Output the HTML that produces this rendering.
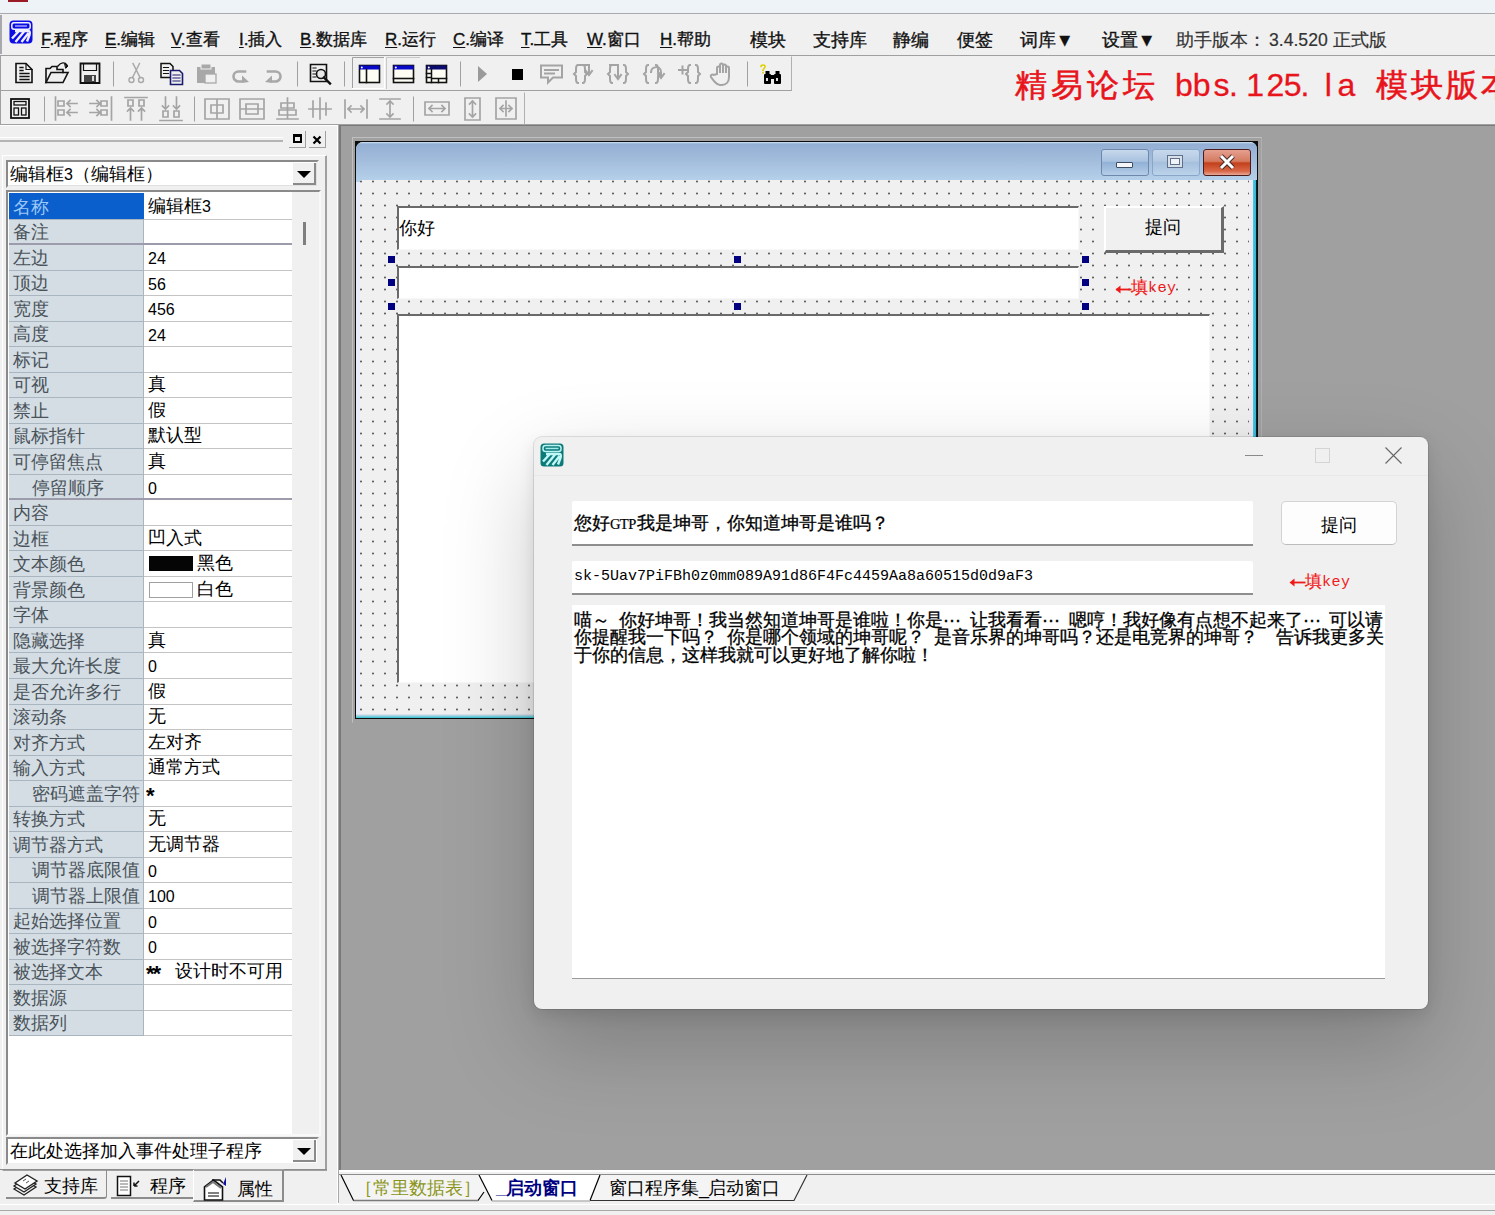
<!DOCTYPE html>
<html><head><meta charset="utf-8">
<style>
*{box-sizing:border-box}
html,body{margin:0;padding:0}
body{width:1495px;height:1215px;overflow:hidden;position:relative;background:#f0f0f0;font-family:"Liberation Sans",sans-serif;color:#000}
.a{position:absolute}
#top{left:0;top:0;width:1495px;height:14px;background:#eef3f8;border-bottom:1px solid #a7a9ad}
#menu{left:0;top:14px;width:1495px;height:42px;background:#f0f0f0;border-bottom:1px solid #a0a0a0}
.mi{position:absolute;top:16px;font-size:17px;line-height:20px;white-space:nowrap;color:#111;-webkit-text-stroke:0.35px #111}
.mi u{text-decoration:underline;text-underline-offset:2px}
#tb1{left:0;top:56px;width:792px;height:35px;border-bottom:1px solid #a0a0a0;}
#tb2{left:0;top:92px;width:1495px;height:33px;border-bottom:1px solid #a0a0a0;z-index:0}
#mdi{left:339px;top:125px;width:1156px;height:1045px;background:#a0a0a0;border-left:2px solid #7a7a7a;border-top:1px solid #7a7a7a}
.pl{font-size:17.6px;line-height:26px;white-space:nowrap}
.pv{font-size:17.5px;line-height:25px;white-space:nowrap;color:#000}
.fw.fb{font-size:17.9px;-webkit-text-stroke:0.3px #000}
.el{display:inline-block;width:17.9px;font-style:normal;text-align:center}
.sp{display:inline-block;width:8.95px}
.fw{font-size:17.25px;line-height:24px;white-space:nowrap;color:#000}
.bn{top:51.2px;font-size:32px;line-height:40px;color:#e8141c;-webkit-text-stroke:0.3px #e8141c}
.gtp{display:inline-block;width:26.85px;font-style:normal;font-family:"Liberation Serif",serif;font-size:14.5px;letter-spacing:-0.6px;-webkit-text-stroke:0.2px #000}
</style></head><body>
<div id="top" class="a"><div class="a" style="left:8px;top:0;width:20px;height:2px;background:#9a1a26"></div></div>
<div id="menu" class="a">
<div class="a" style="left:0;top:1px;width:2px;height:39px;background:#a8a8b0"></div>
<svg class="a" style="left:9px;top:6px" width="24" height="24" viewBox="0 0 24 24">
<rect x="0.5" y="0.5" width="23" height="23" rx="4" fill="#0c0ce4"/>
<rect x="2.8" y="2.8" width="18.4" height="6.4" rx="2.2" fill="none" stroke="#f0f0ff" stroke-width="1.5"/>
<path d="M6 6h12" stroke="#c8c8ff" stroke-width="1.2"/>
<path d="M6 11h13.5c1.5 0 1.5 2 1 4l-2.5 6.5M3 18.5l7-7.5M6.5 22l9-11M12.5 22l7-9" stroke="#eeeeff" stroke-width="2.4" fill="none" stroke-linejoin="round"/>
</svg>
<div class="a" style="left:1015px;top:50.8px;font-size:32px;line-height:40px;color:#e8141c;white-space:nowrap;letter-spacing:4px;-webkit-text-stroke:0.6px #e8141c">精易论坛</div>
<div class="a bn" style="left:1175px">b</div><div class="a bn" style="left:1192.7px">b</div><div class="a bn" style="left:1213.5px">s</div><div class="a bn" style="left:1229px">.</div><div class="a bn" style="left:1246.3px">1</div><div class="a bn" style="left:1266.4px">2</div><div class="a bn" style="left:1283.7px">5</div><div class="a bn" style="left:1300.6px">.</div><div class="a bn" style="left:1324.8px">l</div><div class="a bn" style="left:1337.6px">a</div>
<div class="a" style="left:1375.5px;top:50.8px;font-size:32px;line-height:40px;color:#e8141c;white-space:nowrap;letter-spacing:3px;-webkit-text-stroke:0.6px #e8141c">模块版本</div>
<span class="mi" style="left:41px"><u>F</u>.程序</span>
<span class="mi" style="left:105px"><u>E</u>.编辑</span>
<span class="mi" style="left:171px"><u>V</u>.查看</span>
<span class="mi" style="left:239px"><u>I</u>.插入</span>
<span class="mi" style="left:300px"><u>B</u>.数据库</span>
<span class="mi" style="left:385px"><u>R</u>.运行</span>
<span class="mi" style="left:453px"><u>C</u>.编译</span>
<span class="mi" style="left:521px"><u>T</u>.工具</span>
<span class="mi" style="left:587px"><u>W</u>.窗口</span>
<span class="mi" style="left:660px"><u>H</u>.帮助</span>
<span class="mi" style="left:750px;font-size:17.6px">模块</span>
<span class="mi" style="left:813px;font-size:17.6px">支持库</span>
<span class="mi" style="left:893px;font-size:17.6px">静编</span>
<span class="mi" style="left:957px;font-size:17.6px">便签</span>
<span class="mi" style="left:1020px;font-size:17.6px">词库▼</span>
<span class="mi" style="left:1102px;font-size:17.6px">设置▼</span>
<span class="mi" style="left:1176px;font-size:17.6px;color:#333;-webkit-text-stroke:0.2px #333">助手版本<i style="display:inline-block;width:21px;font-style:normal">：</i>3.4.520 正式版</span>
</div>
<div id="tb1" class="a"></div>
<div id="tb2" class="a"></div>
<svg class="a" style="left:0;top:0" width="800" height="126" viewBox="0 0 800 126">
<g fill="none" stroke-linecap="square">
<!-- toolbar left border -->
<line x1="0.5" y1="56" x2="0.5" y2="125" stroke="#a0a0a0"/>
<line x1="791.5" y1="57" x2="791.5" y2="90" stroke="#b0b0b0"/>
<line x1="524.5" y1="93" x2="524.5" y2="124" stroke="#b0b0b0"/>
<!-- separators row1 -->
<g stroke="#a0a0a0"><line x1="113.5" y1="62" x2="113.5" y2="86"/><line x1="297.5" y1="62" x2="297.5" y2="86"/><line x1="344.5" y1="62" x2="344.5" y2="86"/><line x1="460.5" y1="62" x2="460.5" y2="86"/><line x1="747.5" y1="62" x2="747.5" y2="86"/></g>
<g stroke="#a0a0a0"><line x1="44.5" y1="97" x2="44.5" y2="121"/><line x1="194.5" y1="97" x2="194.5" y2="121"/><line x1="413.5" y1="97" x2="413.5" y2="121"/></g>
<!-- new doc -->
<path d="M16 63.5h10l6 6v13h-16z" stroke="#111" stroke-width="1.6"/>
<path d="M26 63.5v6h6" stroke="#111" stroke-width="1.2"/>
<path d="M20 67.5h3M20 70.5h3M20 73.5h9M20 76.5h9M20 79.5h9" stroke="#111" stroke-width="1.3"/>
<!-- open folder -->
<path d="M46 82.5v-14h4l2 -2h5v3h6v3" stroke="#111" stroke-width="1.6"/>
<path d="M46 82.5l5-10h17l-5 10z" stroke="#111" stroke-width="1.6"/>
<path d="M58 66c3-4 7-4 9 -1" stroke="#111" stroke-width="1.3"/><path d="M65 64l3 2-2 2z" fill="#111" stroke="#111"/>
<!-- save -->
<path d="M80.5 63.5h19v19.5h-19z" stroke="#111" stroke-width="1.8"/>
<path d="M83.5 63.5v7h13v-7" stroke="#111" stroke-width="1.2"/>
<rect x="84" y="75" width="12" height="7" fill="#444"/><rect x="92" y="76" width="2" height="5" fill="#ddd"/>
<!-- cut (gray) -->
<g stroke="#a8a8a8" stroke-width="1.4"><circle cx="131.5" cy="80" r="2.5"/><circle cx="141" cy="80" r="2.5"/><path d="M132.5 77.5l7-14M140 77.5l-7-14"/></g>
<!-- copy -->
<path d="M161 63.5h9l3 3v11h-12z" stroke="#111" stroke-width="1.5"/>
<path d="M163.5 67.5h5M163.5 70.5h5M163.5 73.5h5" stroke="#111" stroke-width="1.1"/>
<path d="M170.5 70.5h9l3 3v11h-12z" fill="#f0f0f0" stroke="#1a1a6e" stroke-width="1.6"/>
<path d="M173 75h7M173 78h7M173 81h7" stroke="#1a1a6e" stroke-width="1.2"/>
<!-- paste gray -->
<path d="M197 67h18v16h-18z" fill="#a8a8a8"/><rect x="201" y="64" width="10" height="5" fill="#a8a8a8" stroke="#f0f0f0"/><rect x="205" y="74" width="11" height="9" fill="#f0f0f0" stroke="#a8a8a8" stroke-width="1.3"/>
<!-- redo/undo gray -->
<path d="M245 71.5H238.5A5 5 0 0 0 238.5 81.5H241" stroke="#a8a8a8" stroke-width="2.6"/><path d="M242 75.5l7 6.5-7 1z" fill="#a8a8a8"/>
<path d="M268 71.5H275.5A5 5 0 0 1 275.5 81.5H273" stroke="#a8a8a8" stroke-width="2.6"/><path d="M272 75.5l-7 6.5 7 1z" fill="#a8a8a8"/>
<!-- find -->
<path d="M310.5 64.5h16v17h-16z" stroke="#111" stroke-width="1.6"/>
<path d="M313 68h3M313 71h3M313 74h3M313 77h3" stroke="#111" stroke-width="1.2"/>
<circle cx="321" cy="74" r="4.5" fill="#e8e8e8" stroke="#111" stroke-width="1.6"/><path d="M324 77.5l6 6" stroke="#111" stroke-width="2.4"/>
<!-- pressed button -->
<path d="M352.5 88.5v-31h32" stroke="#a0a0a0"/><path d="M352.5 88.5h32v-31" stroke="#fff"/>
<path d="M386.5 88.5v-31h33" stroke="#c8c8c8"/>
<!-- layouts -->
<g stroke="#111" stroke-width="1.6">
<rect x="359.5" y="65.5" width="20" height="17" fill="#fdfdf4"/><rect x="393.5" y="65.5" width="20" height="17" fill="#fdfdf4"/><rect x="426.5" y="65.5" width="20" height="17" fill="#fdfdf4"/>
</g>
<rect x="359.5" y="65.5" width="20" height="4" fill="#0808c8"/><rect x="393.5" y="65.5" width="20" height="4" fill="#0808c8"/><rect x="426.5" y="65.5" width="20" height="4" fill="#0a0a70"/>
<circle cx="361.8" cy="67.5" r="1" fill="#fff"/><circle cx="395.8" cy="67.5" r="1" fill="#fff"/><circle cx="428.8" cy="67.5" r="1" fill="#fff"/>
<path d="M366.5 69.5v13" stroke="#111" stroke-width="1.6"/>
<path d="M393.5 78.5h20" stroke="#111" stroke-width="1.6"/>
<path d="M431.5 69.5v13M426.5 73.5h5M426.5 77.5h5M431.5 78.5h15M438.5 78.5v4" stroke="#111" stroke-width="1.5"/>
<!-- play/stop -->
<path d="M478 66l9 8-9 8z" fill="#9a9a9a"/>
<rect x="512" y="69" width="11" height="11" fill="#000"/>
<!-- gray run icons -->
<g stroke="#a4a4a4" stroke-width="2">
<path d="M541 65.5h21v12h-9l-5 5v-5h-7z"/><path d="M545 70h13M545 73.5h9"/>
<path d="M578 65c-2 0-2 2-2 4v3l-2 2 2 2v3c0 2 0 4 2 4M583 65c2 0 2 2 2 4v3l2 2-2 2v3c0 2 0 4-2 4M580 65h9v8M586 71l3 4 3-4"/>
<path d="M612 65c-2 0-2 2-2 4v3l-2 2 2 2v3c0 2 0 4 2 4M624 65c2 0 2 2 2 4v3l2 2-2 2v3c0 2 0 4-2 4M610 65h8v13M615 75l3 4 3-4"/>
<path d="M648 65c-2 0-2 2-2 4v3l-2 2 2 2v3c0 2 0 4 2 4M656 65c2 0 2 2 2 4v3l2 2-2 2v3c0 2 0 4-2 4M651 72c0-6 10-7 10 0v4M658 74l3 4 3-4"/>
<path d="M690 65c-2 0-2 2-2 4v3l-2 2 2 2v3c0 2 0 4 2 4M696 65c2 0 2 2 2 4v3l2 2-2 2v3c0 2 0 4-2 4M679 70h7M682.5 66.5v7"/>
<path d="M717 74v-6c0-2 3-2 3 0v5v-8c0-2 3-2 3 0v8v-7c0-2 3-2 3 0v7v-5c0-2 3-2 3 0v9c0 5-3 8-7 8h-2c-3 0-4-2-6-4l-3-4c-1-2 1-3 3-2z"/>
</g>
<!-- binoculars -->
<path d="M761 66.5c0-2 4-2 4 0s-2 2-2 4" stroke="#e0d000" stroke-width="1.6"/><rect x="762.2" y="72" width="1.6" height="1.6" fill="#e0d000"/>
<rect x="764" y="74" width="7" height="10" rx="1" fill="#000"/><rect x="774" y="74" width="7" height="10" rx="1" fill="#000"/>
<rect x="765.5" y="71" width="4" height="4" fill="#000"/><rect x="775.5" y="71" width="4" height="4" fill="#000"/>
<rect x="770" y="75" width="5" height="4" fill="#000"/>
<rect x="766" y="78" width="2" height="3" fill="#ddd"/><rect x="776" y="78" width="2" height="3" fill="#ddd"/>
<!-- row2 layout icon -->
<rect x="11" y="99" width="18" height="19" stroke="#111" stroke-width="1.8"/>
<rect x="14" y="101.5" width="12" height="3.5" stroke="#111" stroke-width="1.3"/>
<rect x="14" y="108" width="4.5" height="7" stroke="#111" stroke-width="1.3"/><rect x="21.5" y="108" width="4.5" height="7" stroke="#111" stroke-width="1.3"/>
<!-- row2 gray align icons -->
<g stroke="#a4a4a4" stroke-width="1.7">
<path d="M55.5 97v23M58 101h6v5h-6zM58 110h6v5h-6zM67 103.5h10M67 112.5h10M70 100.5l-3 3 3 3M70 109.5l-3 3 3 3"/>
<path d="M111.5 97v23M101 101h6v5h-6zM101 110h6v5h-6zM90 103.5h10M90 112.5h10M97 100.5l3 3-3 3M97 109.5l3 3-3 3"/>
<path d="M125 97.5h22M128 100h5v6h-5zM139 100h5v6h-5zM130.5 108v12M141.5 108v12M127.5 111l3-3 3 3M138.5 111l3-3 3 3"/>
<path d="M160 120.5h22M163 111h5v6h-5zM174 111h5v6h-5zM165.5 97v12M176.5 97v12M162.5 106l3 3 3-3M173.5 106l3 3 3-3"/>
<path d="M205 99h24v20h-24zM217 99v20M211 105h12v8h-12z"/>
<path d="M240 99h24v20h-24zM240 109h24M246 104h12v10h-12z"/>
<path d="M277 119h21M287.5 98v21M281 103h13v5h-13zM279 110h17v5h-17z"/>
<path d="M309 109h22M320 98v21M313 101v16M326 103v12"/>
<path d="M345 100v18M367 100v18M348 109h16M351 106l-3 3 3 3M361 106l3 3-3 3"/>
<path d="M380 99h20M380 119h20M390 101v16M387 104l3-3 3 3M387 114l3 3 3-3"/>
<path d="M425 102h24v13h-24zM429 108.5h16M432 105.5l-3 3 3 3M442 105.5l3 3-3 3"/>
<path d="M465 98h15v22h-15zM472.5 101v16M469.5 104l3-3 3 3M469.5 114l3 3 3-3"/>
<path d="M496 98h20v21h-20zM500 108.5h12M506 101v15M503 105.5l-3 3 3 3M509 105.5l3 3-3 3"/>
</g>
</g>
</svg>

<div id="mdi" class="a"></div>
<!-- designer form -->
<div class="a" style="left:352px;top:137px;width:910px;height:586px;border:1px solid #c0c0c0;border-right-color:#b0b0b0;border-bottom-color:transparent"></div>
<div class="a" style="left:355px;top:141px;width:903px;height:578px;background:#0c0c0c"></div>
<div class="a" style="left:356px;top:142px;width:901px;height:576px;background:#e8ecf8;border-radius:7px 7px 0 0;overflow:hidden">
  <div class="a" style="left:0;top:0;width:901px;height:40px;background:linear-gradient(#cfe4f6 0px,#93afd3 2px,#a4bedd 20px,#b5d0ea 38px)"></div>
  <div class="a" style="right:0;top:38px;width:8px;height:538px;background:linear-gradient(90deg,#f2eef4 0,#f0e8f2 50%,#48c8e0 56%,#30b8d8 85%,#0c2030 88%)"></div>
  <div class="a" style="left:0;bottom:0;width:901px;height:4px;background:linear-gradient(#f4e4f0,#30c0d0)"></div>
</div>
<div id="grid" class="a" style="left:360px;top:180px;width:889px;height:534px;background-color:#f0f0f0;background-image:radial-gradient(circle at 1px 1.5px,#606060 0.85px,transparent 1.25px);background-size:12px 12px;background-position:0px 0px"></div>
<!-- title buttons -->
<div class="a" style="left:1101px;top:149px;width:48px;height:27px;border:1px solid #6d88ac;border-radius:3px;background:linear-gradient(#c6d8ec,#a9c2df 45%,#92b1d6 50%,#b4cde8)"></div>
<div class="a" style="left:1116px;top:162px;width:17px;height:6px;background:#f4f6f8;border:1px solid #3c4c64;border-radius:1px"></div>
<div class="a" style="left:1152px;top:149px;width:48px;height:27px;border:1px solid #89a6c8;border-radius:3px;background:linear-gradient(#c6d8ec,#b3c9e2 45%,#a5bfdd 50%,#bcd3ea)"></div>
<div class="a" style="left:1167px;top:155px;width:16px;height:13px;border:1px solid #60708a;background:#d8e0ea"></div>
<div class="a" style="left:1170px;top:158px;width:10px;height:7px;border:1px solid #60708a;background:#f0f4f8"></div>
<div class="a" style="left:1203px;top:149px;width:48px;height:27px;border:1px solid #4a1c1c;border-radius:3px;background:linear-gradient(#e6a090,#d47a60 45%,#c4401c 52%,#d86848 85%,#e8a898)"></div>
<svg class="a" style="left:1217px;top:153px" width="20" height="18" viewBox="0 0 20 18"><path d="M4 3l12 12M16 3l-12 12" stroke="#4a2a2a" stroke-width="5"/><path d="M4 3l12 12M16 3l-12 12" stroke="#fff" stroke-width="3"/></svg>
<!-- controls -->
<div class="a" style="left:397px;top:206px;width:682px;height:44px;background:#fff;border-top:2px solid #6a6a6a;border-left:2px solid #6a6a6a;border-bottom:1px solid #f8f8f8;border-right:1px solid #f8f8f8"></div>
<div class="a pv" style="left:399px;top:216px;font-size:17.5px;line-height:25px">你好</div>
<div class="a" style="left:1104px;top:206px;width:120px;height:47px;background:#f0f0f0;border-top:2px solid #fff;border-left:2px solid #fff;border-bottom:3px solid #6a6a6a;border-right:3px solid #6a6a6a"></div>
<div class="a pv" style="left:1145px;top:215px;font-size:18px;line-height:25px">提问</div>
<div class="a" style="left:397px;top:266px;width:682px;height:33px;background:#fff;border-top:2px solid #6a6a6a;border-left:2px solid #6a6a6a;border-bottom:1px solid #f8f8f8;border-right:1px solid #f8f8f8"></div>
<div class="a" style="left:397px;top:314px;width:813px;height:369px;background:#fff;border-top:2px solid #6a6a6a;border-left:2px solid #6a6a6a;border-bottom:1px solid #f8f8f8;border-right:1px solid #f8f8f8"></div>
<svg class="a" style="left:1115px;top:284.5px" width="17" height="9" viewBox="0 0 17 9"><path d="M4 4.5h12.5" stroke="#f01818" stroke-width="1.8"/><path d="M0.5 4.5l5-4v8z" fill="#f01818"/></svg><div class="a" style="left:1131px;top:276px;font-size:17px;line-height:24px;color:#f01818;white-space:nowrap;-webkit-text-stroke:0.2px #f01818">填</div><div class="a" style="left:1148px;top:278px;font-family:'Liberation Mono',monospace;font-size:15px;line-height:22px;color:#f01818;white-space:nowrap;letter-spacing:0.5px">key</div>
<!-- handles -->
<div class="a" style="left:388px;top:256px;width:7px;height:7px;background:#000080"></div>
<div class="a" style="left:734px;top:256px;width:7px;height:7px;background:#000080"></div>
<div class="a" style="left:1082px;top:256px;width:7px;height:7px;background:#000080"></div>
<div class="a" style="left:388px;top:279px;width:7px;height:7px;background:#000080"></div>
<div class="a" style="left:1082px;top:279px;width:7px;height:7px;background:#000080"></div>
<div class="a" style="left:388px;top:303px;width:7px;height:7px;background:#000080"></div>
<div class="a" style="left:734px;top:303px;width:7px;height:7px;background:#000080"></div>
<div class="a" style="left:1082px;top:303px;width:7px;height:7px;background:#000080"></div>

<!-- floating runtime window -->
<div class="a" style="left:534px;top:437px;width:894px;height:572px;border-radius:8px;background:#f0f0f0;box-shadow:0 0 0 1px rgba(0,0,0,0.10),0 6px 16px rgba(0,0,0,0.10),0 36px 90px 0 rgba(0,0,0,0.21)"></div>
<svg class="a" style="left:540px;top:443px" width="24" height="24" viewBox="0 0 24 24">
<rect x="0.5" y="0.5" width="23" height="23" rx="3.5" fill="#0e7a78"/>
<rect x="3" y="2.5" width="18" height="6" rx="2.5" fill="none" stroke="#b8f4f4" stroke-width="1.5"/>
<rect x="5.5" y="4.7" width="13" height="1.5" fill="#a0ecec"/>
<path d="M6 11h13.5c1.5 0 1.5 2 1 4l-2.5 6.5M3 18.5l7-7.5M6.5 22l9-11M12.5 22l7-9" stroke="#c0f8f8" stroke-width="2.4" fill="none" stroke-linejoin="round"/>
</svg>
<div class="a" style="left:1245px;top:455px;width:18px;height:1px;background:#8a8a8a"></div>
<div class="a" style="left:1315px;top:448px;width:15px;height:15px;border:1px solid #d4d4d4"></div>
<svg class="a" style="left:1385px;top:447px" width="17" height="17" viewBox="0 0 17 17"><path d="M0.5 0.5l16 16M16.5 0.5l-16 16" stroke="#666" stroke-width="1.1"/></svg>
<div class="a" style="left:534px;top:475px;width:894px;height:1px;background:#e8e8e8"></div>
<div class="a" style="left:572px;top:501px;width:681px;height:45px;background:#fff;border-bottom:2px solid #8e8e8e;border-radius:2px 2px 0 0"></div>
<div class="a fw fb" style="left:574px;top:511px">您好<i class="gtp">GTP</i>我是坤哥，你知道坤哥是谁吗？</div>
<div class="a" style="left:1281px;top:501px;width:116px;height:44px;background:#fdfdfd;border:1px solid #d4d4d4;border-bottom-color:#bcbcbc;border-radius:5px"></div>
<div class="a fw" style="left:1321px;top:513px;font-size:18px">提问</div>
<div class="a" style="left:572px;top:561px;width:681px;height:34px;background:#fff;border-bottom:2px solid #8e8e8e;border-radius:2px 2px 0 0"></div>
<div class="a" style="left:574px;top:566px;font-family:'Liberation Mono',monospace;font-size:15px;line-height:22px;white-space:nowrap;color:#000">sk-5Uav7PiFBh0z0mm089A91d86F4Fc4459Aa8a60515d0d9aF3</div>
<svg class="a" style="left:1289px;top:577.5px" width="17" height="9" viewBox="0 0 17 9"><path d="M4 4.5h12.5" stroke="#f01818" stroke-width="1.8"/><path d="M0.5 4.5l5-4v8z" fill="#f01818"/></svg><div class="a" style="left:1305px;top:570px;font-size:17px;line-height:24px;color:#f01818;white-space:nowrap;-webkit-text-stroke:0.2px #f01818">填</div><div class="a" style="left:1322px;top:572px;font-family:'Liberation Mono',monospace;font-size:15px;line-height:22px;color:#f01818;white-space:nowrap;letter-spacing:0.5px">key</div>
<div class="a" style="left:572px;top:605px;width:813px;height:374px;background:#fff;border-bottom:1px solid #9a9a9a"></div>
<div class="a fw fb" style="left:574px;top:607.5px">喵～<i class="sp"></i>你好坤哥！我当然知道坤哥是谁啦！你是<i class="el">⋯</i><i class="sp"></i>让我看看<i class="el">⋯</i><i class="sp"></i>嗯哼！我好像有点想不起来了<i class="el">⋯</i><i class="sp"></i>可以请</div>
<div class="a fw fb" style="left:574px;top:625.2px">你提醒我一下吗？<i class="sp"></i>你是哪个领域的坤哥呢？<i class="sp"></i>是音乐界的坤哥吗？还是电竞界的坤哥？<i class="sp"></i><i class="sp"></i>告诉我更多关</div>
<div class="a fw fb" style="left:574px;top:642.9px">于你的信息，这样我就可以更好地了解你啦！</div>
<div id="lp" class="a" style="left:0;top:125px;width:339px;height:1080px;background:#f0f0f0">
</div>
<div class="a" style="left:0;top:125px;width:339px;height:1px;background:#fff"></div>
<div class="a" style="left:0;top:137px;width:283px;height:1px;background:#fff"></div>
<div class="a" style="left:0;top:140px;width:283px;height:2px;background:#b4b4b4"></div>
<div class="a" style="left:337px;top:125px;width:2px;height:1080px;background:#fff"></div>
<!-- panel buttons -->
<div class="a" style="left:289px;top:131px;width:17px;height:17px;border-right:1px solid #a0a0a0;border-bottom:1px solid #a0a0a0"></div>
<div class="a" style="left:293px;top:134px;width:9px;height:9px;border:2px solid #000;border-top-width:3px"></div>
<div class="a" style="left:309px;top:131px;width:17px;height:17px;border-right:1px solid #a0a0a0;border-bottom:1px solid #a0a0a0"></div>
<svg class="a" style="left:312px;top:135px" width="10" height="10" viewBox="0 0 10 10"><path d="M1.5 1.5l7 7M8.5 1.5l-7 7" stroke="#000" stroke-width="2.2"/></svg>
<!-- outer frame -->
<div class="a" style="left:2px;top:155px;width:325px;height:1016px;border:1px solid #a0a0a0;border-left-color:#fff;border-top-color:#fff"></div>
<div class="a" style="left:3px;top:156px;width:323px;height:1014px;border:1px solid #e3e3e3;border-right-color:#a0a0a0;border-bottom-color:#a0a0a0;border-left:0;border-top:0"></div>
<!-- combobox top -->
<div class="a" style="left:6px;top:160px;width:313px;height:28px;background:#fff;border:2px solid #8a8a8a;border-right-color:#f0f0f0;border-bottom-color:#f0f0f0"></div>
<div class="a" style="left:8px;top:162px;width:309px;height:24px;border:1px solid #fff;border-right-color:#e0e0e0;border-bottom-color:#e0e0e0"></div>
<div class="a pv" style="left:10px;top:162px;font-size:18px;line-height:25px">编辑框<span style="font-size:16px">3</span>（编辑框）</div>
<div class="a" style="left:293px;top:163px;width:23px;height:22px;background:#f0f0f0;border-right:2px solid #8a8a8a;border-bottom:2px solid #8a8a8a"></div>
<svg class="a" style="left:297px;top:171px" width="14" height="8"><path d="M0 0h14l-7 7z" fill="#000"/></svg>
<!-- grid frame -->
<div class="a" style="left:6px;top:190px;width:315px;height:946px;background:#fff;border:2px solid #8a8a8a;border-right-color:#f8f8f8;border-bottom-color:#f8f8f8"></div>
<div class="a" style="left:9px;top:193px;width:135px;height:842px;background:#d3dde3"></div>
<div class="a" style="left:143px;top:193px;width:1px;height:842px;background:#a9b6bf"></div>
<div class="a" style="left:292px;top:192px;width:27px;height:942px;background:#f0f0f0"></div>
<div class="a" style="left:303px;top:222px;width:3px;height:23px;background:#7f7f7f"></div>
<div class="a" style="left:9px;top:193.00px;width:135px;height:25.52px;background:#0b5fcc"></div>
<div class="a pl" style="left:13px;top:193.80px;color:#9cc8f8">名称</div>
<div class="a" style="left:9px;top:218.62px;width:135px;height:1px;background:#a9b6bf"></div>
<div class="a" style="left:144px;top:218.62px;width:148px;height:1px;background:#c4c4c4"></div>
<div class="a pv" style="left:148px;top:193.80px">编辑框<span style="font-size:16px">3</span></div>
<div class="a pl" style="left:13px;top:219.32px;color:#4a525a">备注</div>
<div class="a" style="left:9px;top:243.14px;width:283px;height:2px;background:#9c9cac"></div>
<div class="a pl" style="left:13px;top:244.84px;color:#4a525a">左边</div>
<div class="a" style="left:9px;top:269.66px;width:135px;height:1px;background:#a9b6bf"></div>
<div class="a" style="left:144px;top:269.66px;width:148px;height:1px;background:#c4c4c4"></div>
<div class="a pv" style="left:148px;top:246.04px;font-size:16px">24</div>
<div class="a pl" style="left:13px;top:270.36px;color:#4a525a">顶边</div>
<div class="a" style="left:9px;top:295.18px;width:135px;height:1px;background:#a9b6bf"></div>
<div class="a" style="left:144px;top:295.18px;width:148px;height:1px;background:#c4c4c4"></div>
<div class="a pv" style="left:148px;top:271.56px;font-size:16px">56</div>
<div class="a pl" style="left:13px;top:295.88px;color:#4a525a">宽度</div>
<div class="a" style="left:9px;top:320.70px;width:135px;height:1px;background:#a9b6bf"></div>
<div class="a" style="left:144px;top:320.70px;width:148px;height:1px;background:#c4c4c4"></div>
<div class="a pv" style="left:148px;top:297.08px;font-size:16px">456</div>
<div class="a pl" style="left:13px;top:321.40px;color:#4a525a">高度</div>
<div class="a" style="left:9px;top:346.22px;width:135px;height:1px;background:#a9b6bf"></div>
<div class="a" style="left:144px;top:346.22px;width:148px;height:1px;background:#c4c4c4"></div>
<div class="a pv" style="left:148px;top:322.60px;font-size:16px">24</div>
<div class="a pl" style="left:13px;top:346.92px;color:#4a525a">标记</div>
<div class="a" style="left:9px;top:371.74px;width:135px;height:1px;background:#a9b6bf"></div>
<div class="a" style="left:144px;top:371.74px;width:148px;height:1px;background:#c4c4c4"></div>
<div class="a pl" style="left:13px;top:372.44px;color:#4a525a">可视</div>
<div class="a" style="left:9px;top:397.26px;width:135px;height:1px;background:#a9b6bf"></div>
<div class="a" style="left:144px;top:397.26px;width:148px;height:1px;background:#c4c4c4"></div>
<div class="a pv" style="left:148px;top:372.44px">真</div>
<div class="a pl" style="left:13px;top:397.96px;color:#4a525a">禁止</div>
<div class="a" style="left:9px;top:422.78px;width:135px;height:1px;background:#a9b6bf"></div>
<div class="a" style="left:144px;top:422.78px;width:148px;height:1px;background:#c4c4c4"></div>
<div class="a pv" style="left:148px;top:397.96px">假</div>
<div class="a pl" style="left:13px;top:423.48px;color:#4a525a">鼠标指针</div>
<div class="a" style="left:9px;top:448.30px;width:135px;height:1px;background:#a9b6bf"></div>
<div class="a" style="left:144px;top:448.30px;width:148px;height:1px;background:#c4c4c4"></div>
<div class="a pv" style="left:148px;top:423.48px">默认型</div>
<div class="a pl" style="left:13px;top:449.00px;color:#4a525a">可停留焦点</div>
<div class="a" style="left:9px;top:473.82px;width:135px;height:1px;background:#a9b6bf"></div>
<div class="a" style="left:144px;top:473.82px;width:148px;height:1px;background:#c4c4c4"></div>
<div class="a pv" style="left:148px;top:449.00px">真</div>
<div class="a pl" style="left:32px;top:474.52px;color:#4a525a">停留顺序</div>
<div class="a" style="left:9px;top:498.34px;width:283px;height:2px;background:#9c9cac"></div>
<div class="a pv" style="left:148px;top:475.72px;font-size:16px">0</div>
<div class="a pl" style="left:13px;top:500.04px;color:#4a525a">内容</div>
<div class="a" style="left:9px;top:524.86px;width:135px;height:1px;background:#a9b6bf"></div>
<div class="a" style="left:144px;top:524.86px;width:148px;height:1px;background:#c4c4c4"></div>
<div class="a pl" style="left:13px;top:525.56px;color:#4a525a">边框</div>
<div class="a" style="left:9px;top:550.38px;width:135px;height:1px;background:#a9b6bf"></div>
<div class="a" style="left:144px;top:550.38px;width:148px;height:1px;background:#c4c4c4"></div>
<div class="a pv" style="left:148px;top:525.56px">凹入式</div>
<div class="a pl" style="left:13px;top:551.08px;color:#4a525a">文本颜色</div>
<div class="a" style="left:9px;top:575.90px;width:135px;height:1px;background:#a9b6bf"></div>
<div class="a" style="left:144px;top:575.90px;width:148px;height:1px;background:#c4c4c4"></div>
<div class="a" style="left:149px;top:556.28px;width:44px;height:15px;background:#050505"></div>
<div class="a pv" style="left:197px;top:551.08px">黑色</div>
<div class="a pl" style="left:13px;top:576.60px;color:#4a525a">背景颜色</div>
<div class="a" style="left:9px;top:601.42px;width:135px;height:1px;background:#a9b6bf"></div>
<div class="a" style="left:144px;top:601.42px;width:148px;height:1px;background:#c4c4c4"></div>
<div class="a" style="left:149px;top:581.80px;width:44px;height:16px;background:#fff;border:1px solid #a0a0a0"></div>
<div class="a pv" style="left:197px;top:576.60px">白色</div>
<div class="a pl" style="left:13px;top:602.12px;color:#4a525a">字体</div>
<div class="a" style="left:9px;top:626.94px;width:135px;height:1px;background:#a9b6bf"></div>
<div class="a" style="left:144px;top:626.94px;width:148px;height:1px;background:#c4c4c4"></div>
<div class="a pl" style="left:13px;top:627.64px;color:#4a525a">隐藏选择</div>
<div class="a" style="left:9px;top:652.46px;width:135px;height:1px;background:#a9b6bf"></div>
<div class="a" style="left:144px;top:652.46px;width:148px;height:1px;background:#c4c4c4"></div>
<div class="a pv" style="left:148px;top:627.64px">真</div>
<div class="a pl" style="left:13px;top:653.16px;color:#4a525a">最大允许长度</div>
<div class="a" style="left:9px;top:677.98px;width:135px;height:1px;background:#a9b6bf"></div>
<div class="a" style="left:144px;top:677.98px;width:148px;height:1px;background:#c4c4c4"></div>
<div class="a pv" style="left:148px;top:654.36px;font-size:16px">0</div>
<div class="a pl" style="left:13px;top:678.68px;color:#4a525a">是否允许多行</div>
<div class="a" style="left:9px;top:703.50px;width:135px;height:1px;background:#a9b6bf"></div>
<div class="a" style="left:144px;top:703.50px;width:148px;height:1px;background:#c4c4c4"></div>
<div class="a pv" style="left:148px;top:678.68px">假</div>
<div class="a pl" style="left:13px;top:704.20px;color:#4a525a">滚动条</div>
<div class="a" style="left:9px;top:729.02px;width:135px;height:1px;background:#a9b6bf"></div>
<div class="a" style="left:144px;top:729.02px;width:148px;height:1px;background:#c4c4c4"></div>
<div class="a pv" style="left:148px;top:704.20px">无</div>
<div class="a pl" style="left:13px;top:729.72px;color:#4a525a">对齐方式</div>
<div class="a" style="left:9px;top:754.54px;width:135px;height:1px;background:#a9b6bf"></div>
<div class="a" style="left:144px;top:754.54px;width:148px;height:1px;background:#c4c4c4"></div>
<div class="a pv" style="left:148px;top:729.72px">左对齐</div>
<div class="a pl" style="left:13px;top:755.24px;color:#4a525a">输入方式</div>
<div class="a" style="left:9px;top:780.06px;width:135px;height:1px;background:#a9b6bf"></div>
<div class="a" style="left:144px;top:780.06px;width:148px;height:1px;background:#c4c4c4"></div>
<div class="a pv" style="left:148px;top:755.24px">通常方式</div>
<div class="a pl" style="left:32px;top:780.76px;color:#4a525a">密码遮盖字符</div>
<div class="a" style="left:9px;top:805.58px;width:135px;height:1px;background:#a9b6bf"></div>
<div class="a" style="left:144px;top:805.58px;width:148px;height:1px;background:#c4c4c4"></div>
<div class="a pv" style="left:146px;top:783px;font-size:22px;font-weight:bold">*</div>
<div class="a pl" style="left:13px;top:806.28px;color:#4a525a">转换方式</div>
<div class="a" style="left:9px;top:831.10px;width:135px;height:1px;background:#a9b6bf"></div>
<div class="a" style="left:144px;top:831.10px;width:148px;height:1px;background:#c4c4c4"></div>
<div class="a pv" style="left:148px;top:806.28px">无</div>
<div class="a pl" style="left:13px;top:831.80px;color:#4a525a">调节器方式</div>
<div class="a" style="left:9px;top:856.62px;width:135px;height:1px;background:#a9b6bf"></div>
<div class="a" style="left:144px;top:856.62px;width:148px;height:1px;background:#c4c4c4"></div>
<div class="a pv" style="left:148px;top:831.80px">无调节器</div>
<div class="a pl" style="left:32px;top:857.32px;color:#4a525a">调节器底限值</div>
<div class="a" style="left:9px;top:882.14px;width:135px;height:1px;background:#a9b6bf"></div>
<div class="a" style="left:144px;top:882.14px;width:148px;height:1px;background:#c4c4c4"></div>
<div class="a pv" style="left:148px;top:858.52px;font-size:16px">0</div>
<div class="a pl" style="left:32px;top:882.84px;color:#4a525a">调节器上限值</div>
<div class="a" style="left:9px;top:907.66px;width:135px;height:1px;background:#a9b6bf"></div>
<div class="a" style="left:144px;top:907.66px;width:148px;height:1px;background:#c4c4c4"></div>
<div class="a pv" style="left:148px;top:884.04px;font-size:16px">100</div>
<div class="a pl" style="left:13px;top:908.36px;color:#4a525a">起始选择位置</div>
<div class="a" style="left:9px;top:933.18px;width:135px;height:1px;background:#a9b6bf"></div>
<div class="a" style="left:144px;top:933.18px;width:148px;height:1px;background:#c4c4c4"></div>
<div class="a pv" style="left:148px;top:909.56px;font-size:16px">0</div>
<div class="a pl" style="left:13px;top:933.88px;color:#4a525a">被选择字符数</div>
<div class="a" style="left:9px;top:958.70px;width:135px;height:1px;background:#a9b6bf"></div>
<div class="a" style="left:144px;top:958.70px;width:148px;height:1px;background:#c4c4c4"></div>
<div class="a pv" style="left:148px;top:935.08px;font-size:16px">0</div>
<div class="a pl" style="left:13px;top:959.40px;color:#4a525a">被选择文本</div>
<div class="a" style="left:9px;top:984.22px;width:135px;height:1px;background:#a9b6bf"></div>
<div class="a" style="left:144px;top:984.22px;width:148px;height:1px;background:#c4c4c4"></div>
<div class="a pv" style="left:146px;top:961px;font-size:22px;font-weight:bold;letter-spacing:-2px">**</div><div class="a pv" style="left:174.5px;top:958.6px">设计时不可用</div>
<div class="a pl" style="left:13px;top:984.92px;color:#4a525a">数据源</div>
<div class="a" style="left:9px;top:1009.74px;width:135px;height:1px;background:#a9b6bf"></div>
<div class="a" style="left:144px;top:1009.74px;width:148px;height:1px;background:#c4c4c4"></div>
<div class="a pl" style="left:13px;top:1010.44px;color:#4a525a">数据列</div>
<div class="a" style="left:9px;top:1035.26px;width:135px;height:1px;background:#a9b6bf"></div>
<div class="a" style="left:144px;top:1035.26px;width:148px;height:1px;background:#c4c4c4"></div>
<!-- event combo -->
<div class="a" style="left:6px;top:1137px;width:313px;height:28px;background:#fff;border:2px solid #8a8a8a;border-right-color:#f0f0f0;border-bottom-color:#f0f0f0"></div>
<div class="a pv" style="left:10px;top:1139px;font-size:18px;line-height:25px">在此处选择加入事件处理子程序</div>
<div class="a" style="left:293px;top:1140px;width:23px;height:22px;background:#f0f0f0;border-right:2px solid #8a8a8a;border-bottom:2px solid #8a8a8a"></div>
<svg class="a" style="left:297px;top:1148px" width="14" height="8"><path d="M0 0h14l-7 7z" fill="#000"/></svg>

<!-- right bottom tab strip -->
<div class="a" style="left:339px;top:1170px;width:1156px;height:35px;background:#f0f0f0"></div>
<div class="a" style="left:339px;top:1170px;width:1156px;height:2px;background:#fff"></div>
<div class="a" style="left:339px;top:1174px;width:1156px;height:1px;background:#8c8c8c"></div>
<div class="a" style="left:338px;top:125px;width:1px;height:1078px;background:#a8a8a8"></div>
<svg class="a" style="left:330px;top:1170px" width="500" height="40" viewBox="330 1170 500 40">
<path d="M341 1175L353 1200.5H478L486 1190L479 1175" fill="#f4f4f4" stroke="none"/>
<path d="M479 1175L492 1200.5H590L600 1175z" fill="#fff"/>
<path d="M600 1175L590 1200.5H794L807 1175z" fill="#f4f4f4"/>
<path d="M341 1175L353.5 1200.5H478L484 1192" fill="none" stroke="#000" stroke-width="1.2"/>
<path d="M353.5 1200.5H478" stroke="#7a7a7a" stroke-width="1.5"/>
<path d="M479 1175L492 1200.5" fill="none" stroke="#000" stroke-width="1.2"/>
<path d="M600 1175L590 1200.5" fill="none" stroke="#000" stroke-width="1.2"/>
<path d="M590 1200.5H794L807 1175" fill="none" stroke="#333" stroke-width="1.2"/>
<path d="M492 1201H590" stroke="#9a9a9a" stroke-width="1"/>
</svg>
<div class="a" style="left:355px;top:1177px;font-size:18px;line-height:22px;color:#8a9418;white-space:nowrap">［常里数据表］</div>
<div class="a" style="left:496px;top:1177px;font-size:18px;line-height:22px;color:#000080;font-weight:bold;white-space:nowrap">_启动窗口</div>
<div class="a" style="left:609px;top:1177px;font-size:18px;line-height:22px;color:#000;white-space:nowrap">窗口程序集<span style="display:inline-block;width:9px">_</span>启动窗口</div>
<!-- status strip -->
<div class="a" style="left:0;top:1204px;width:1495px;height:1px;background:#fff"></div>
<div class="a" style="left:0;top:1210px;width:1495px;height:1px;background:#a8a8a8"></div>
<div class="a" style="left:0;top:1211px;width:1495px;height:4px;background:#f0f0f0"></div>
<!-- left bottom tabs -->
<div class="a" style="left:0;top:1169px;width:193px;height:1px;background:#8c8c8c"></div>
<div class="a" style="left:284px;top:1169px;width:43px;height:1px;background:#8c8c8c"></div>
<div class="a" style="left:6px;top:1170px;width:101px;height:29px;border-right:1px solid #8c8c8c;border-bottom:2px solid #8c8c8c;border-radius:0 0 3px 0"></div>
<div class="a" style="left:111px;top:1170px;width:82px;height:29px;border-bottom:2px solid #8c8c8c"></div>
<div class="a" style="left:193px;top:1170px;width:91px;height:32px;border-right:2px solid #8c8c8c;border-bottom:2px solid #8c8c8c;border-left:1px solid #fff"></div>
<div class="a" style="left:44px;top:1174px;font-size:18px;line-height:24px;white-space:nowrap">支持库</div>
<div class="a" style="left:150px;top:1174px;font-size:18px;line-height:24px;white-space:nowrap">程序</div>
<div class="a" style="left:237px;top:1177px;font-size:18px;line-height:24px;white-space:nowrap">属性</div>
<svg class="a" style="left:10px;top:1172px" width="30" height="28" viewBox="0 0 30 28">
<path d="M4 17l12-8 10 6-12 8z" fill="#f4f4f4" stroke="#222" stroke-width="1.3"/>
<path d="M4 14l12-8 10 6-12 8z" fill="#f4f4f4" stroke="#222" stroke-width="1.3"/>
<path d="M5 11l12-8 10 6-12 8z" fill="#fff" stroke="#222" stroke-width="1.4"/>
<path d="M13 9l3-2M16 11l3-2" stroke="#555" stroke-width="1"/>
</svg>
<svg class="a" style="left:115px;top:1174px" width="30" height="26" viewBox="0 0 30 26">
<rect x="2.5" y="2.5" width="13" height="19" fill="#fff" stroke="#111" stroke-width="1.5"/>
<path d="M5 7h8M5 10h8M5 13h8M5 16h8" stroke="#777" stroke-width="1.2"/>
<path d="M24 7l-5 5M19 12v-3.5M19 12h3.5" stroke="#111" stroke-width="1.5"/>
</svg>
<svg class="a" style="left:202px;top:1175px" width="34" height="28" viewBox="0 0 34 28">
<path d="M2.5 12l9-7 9 7v13h-18z" fill="#fff" stroke="#111" stroke-width="1.6"/>
<path d="M4 12l7-5 8 6" fill="none" stroke="#777" stroke-width="2"/>
<path d="M6 18h11M6 21h11" stroke="#555" stroke-width="1.3"/>
<path d="M10 5h8l3 3" fill="none" stroke="#111" stroke-width="1.5"/>
<path d="M24 2v9l-3-2z" fill="#1010a0"/>
</svg>
</body></html>
